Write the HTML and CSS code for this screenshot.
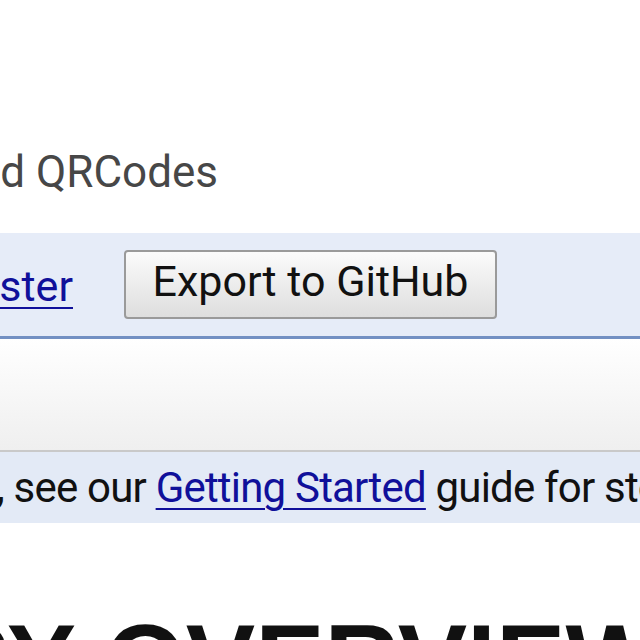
FILE: index.html
```html
<!DOCTYPE html>
<html>
	<head>
		<meta charset="utf-8">
		<title>QRCodes</title>
		<link rel="stylesheet" href="styles.css">
	</head>
	<body>
		<div id="summary">
			<div class="lead"><span>Generate and read QRCodes</span></div>
		</div>
		<div id="action-bar">
			<div class="lead ster-lead"><a href="#">Register</a></div>
			<button id="export-btn">Export to GitHub</button>
		</div>
		<div id="panel"></div>
		<div id="notice">
			<div class="lead comma-lead"><span>If you are new to project hosting,</span></div>
			<span class="notice-text">&nbsp;see our <a href="#">Getting Started</a> guide for step-by-step instructions.</span>
		</div>
		<h1 id="overview">
			<span class="lead y-lead"><span>PROJECT SUMMARY</span></span>
			<span class="heading-rest">&nbsp;OVERVIEW</span>
		</h1>
	</body>
</html>
```

FILE: styles.css
```css
body {
	margin: 0;
	font-family: Roboto, "Noto Sans", sans-serif;
	color: #111111;
	overflow: hidden;
}

a {
	color: #10109a;
	text-decoration: underline;
	text-decoration-thickness: 2px;
	text-underline-offset: 6px;
}

/* text cut off on the left edge of the screen */
.lead {
	display: flex;
	justify-content: flex-end;
	white-space: nowrap;
	flex: none;
}

#summary {
	height: 233px;
	padding-top: 147px;
	box-sizing: border-box;
	font-size: 44px;
	line-height: 50px;
	color: #474747;
}

#summary .lead {
	width: 218px;
}

#action-bar {
	display: flex;
	align-items: center;
	height: 103px;
	background: #e6ecf8;
	border-bottom: solid 3px #7390c3;
	font-size: 43px;
	line-height: 50px;
}

.ster-lead {
	width: 73px;
	margin-top: 2px;
}

#export-btn {
	width: 373px;
	height: 69px;
	margin-left: 51px;
	padding: 0 0 7px 0;
	border: solid 2px #9a9a9a;
	border-radius: 4px;
	background: linear-gradient(#fbfbfb, #dedede);
	font-family: Roboto, "Noto Sans", sans-serif;
	font-size: 43px;
	color: #111111;
}

#panel {
	height: 111px;
	background: linear-gradient(#ffffff, #efefef);
	border-bottom: solid 2px #c9c9c9;
}

#notice {
	display: flex;
	height: 71px;
	padding-top: 11px;
	box-sizing: border-box;
	background: #e3eaf6;
	font-size: 42px;
	line-height: 50px;
	letter-spacing: -0.8px;
	white-space: nowrap;
}

.comma-lead {
	width: 4px;
}

#overview {
	display: flex;
	margin: 86px 0 0 0;
	font-family: "Liberation Sans", Arial, sans-serif;
	font-weight: 700;
	font-size: 104px;
	line-height: 104px;
	white-space: nowrap;
}

.y-lead {
	width: 76px;
}
```
